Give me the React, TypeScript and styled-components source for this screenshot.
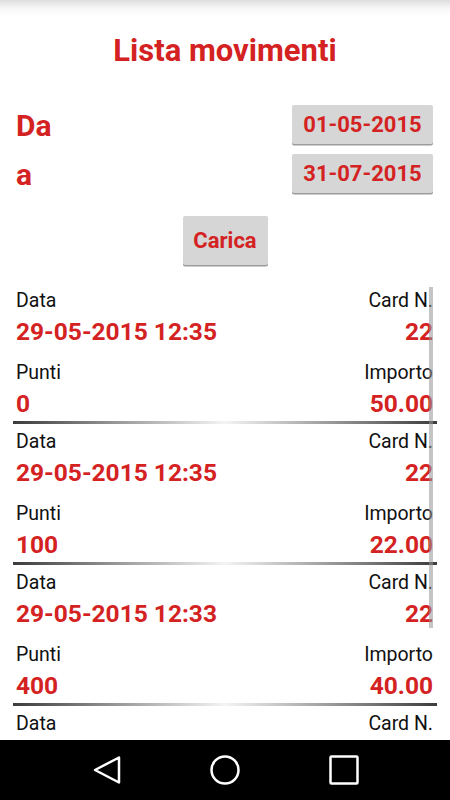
import React from 'react';
import styled, { createGlobalStyle } from 'styled-components';

const RED = '#d42222';

const GlobalStyle = createGlobalStyle`
  html, body {
    margin: 0;
    padding: 0;
    background: #fff;
  }
  body {
    font-family: Roboto, 'Noto Sans', 'Liberation Sans', sans-serif;
  }
`;

const Screen = styled.div`
  width: 450px;
  height: 800px;
  display: flex;
  flex-direction: column;
  background: #fff;
  overflow: hidden;
`;

const TopShadow = styled.div`
  height: 16px;
  flex-shrink: 0;
  background: linear-gradient(#dedede, #f6f6f6 50%, #fff);
`;

const Title = styled.h1`
  margin: 16px 0 0;
  font-size: 31px;
  line-height: 38px;
  font-weight: 700;
  color: ${RED};
  text-align: center;
`;

const Filters = styled.div`
  display: flex;
  flex-direction: column;
  gap: 10px;
  margin-top: 35px;
  padding: 0 17px 0 16px;
`;

const FilterRow = styled.div`
  display: flex;
  align-items: center;
  justify-content: space-between;
  height: 39px;
`;

const FilterLabel = styled.span`
  font-size: 30px;
  line-height: 36px;
  font-weight: 700;
  color: ${RED};
  margin-top: 3px;
`;

const GreyButton = styled.button<{ $width: number; $height: number }>`
  width: ${(p) => p.$width}px;
  height: ${(p) => p.$height}px;
  padding: 0;
  border: none;
  border-radius: 2px;
  background: #d6d6d6;
  box-shadow: 0 1.5px 0 #9c9c9c;
  font-family: inherit;
  font-size: 22px;
  font-weight: 700;
  color: ${RED};
  display: flex;
  align-items: center;
  justify-content: center;
  cursor: pointer;
`;

const LoadWrap = styled.div`
  display: flex;
  justify-content: center;
  margin-top: 23px;
`;

const List = styled.div`
  position: relative;
  flex: 1;
  margin-top: 18px;
  padding: 0 13px;
  overflow: hidden;
`;

const Item = styled.div`
  padding-top: 7px;
`;

const Pair = styled.div<{ $second?: boolean }>`
  display: flex;
  justify-content: space-between;
  padding: 0 4px 0 3px;
  margin-top: ${(p) => (p.$second ? 16 : 0)}px;
`;

const Col = styled.div<{ $right?: boolean }>`
  display: flex;
  flex-direction: column;
  gap: 5px;
  text-align: ${(p) => (p.$right ? 'right' : 'left')};
`;

const Label = styled.span`
  font-size: 19.5px;
  line-height: 22px;
  color: #111;
`;

const Value = styled.span`
  font-size: 24.5px;
  line-height: 29px;
  font-weight: 700;
  color: ${RED};
`;

const Separator = styled.div`
  height: 3px;
  margin-top: 3px;
  background: linear-gradient(
    to right,
    #3c3c3c,
    #9a9a9a 25%,
    #f4f4f4 50%,
    #9a9a9a 75%,
    #3c3c3c
  );
`;

const ScrollThumb = styled.div`
  position: absolute;
  top: 4px;
  right: 17px;
  width: 4px;
  height: 341px;
  background: rgba(150, 150, 150, 0.55);
`;

const NavBar = styled.div`
  height: 60px;
  flex-shrink: 0;
  background: #000;
  display: flex;
  align-items: center;
  justify-content: center;
  gap: 88.5px;
`;

const NavIcon = styled.svg`
  width: 30px;
  height: 30px;
  display: block;
`;

interface IMovement {
  date: string;
  card: string;
  points: string;
  amount: string;
}

const movements: IMovement[] = [
  { date: '29-05-2015 12:35', card: '22', points: '0', amount: '50.00' },
  { date: '29-05-2015 12:35', card: '22', points: '100', amount: '22.00' },
  { date: '29-05-2015 12:33', card: '22', points: '400', amount: '40.00' },
  { date: '28-05-2015 18:10', card: '22', points: '250', amount: '25.00' },
];

const MovementItem: React.FC<{ movement: IMovement }> = ({ movement }) => (
  <Item>
    <Pair>
      <Col>
        <Label>Data</Label>
        <Value>{movement.date}</Value>
      </Col>
      <Col $right>
        <Label>Card N.</Label>
        <Value>{movement.card}</Value>
      </Col>
    </Pair>
    <Pair $second>
      <Col>
        <Label>Punti</Label>
        <Value>{movement.points}</Value>
      </Col>
      <Col $right>
        <Label>Importo</Label>
        <Value>{movement.amount}</Value>
      </Col>
    </Pair>
    <Separator />
  </Item>
);

const App: React.FC = () => {
  return (
    <Screen>
      <GlobalStyle />
      <TopShadow />
      <Title>Lista movimenti</Title>
      <Filters>
        <FilterRow>
          <FilterLabel>Da</FilterLabel>
          <GreyButton $width={141} $height={39}>01-05-2015</GreyButton>
        </FilterRow>
        <FilterRow>
          <FilterLabel>a</FilterLabel>
          <GreyButton $width={141} $height={39}>31-07-2015</GreyButton>
        </FilterRow>
      </Filters>
      <LoadWrap>
        <GreyButton $width={85} $height={49}>Carica</GreyButton>
      </LoadWrap>
      <List>
        {movements.map((m, i) => (
          <MovementItem key={i} movement={m} />
        ))}
        <ScrollThumb />
      </List>
      <NavBar>
        <NavIcon viewBox='0 0 30 30'>
          <path d='M27 2.5 L3 15 L27 27.5 Z' fill='none' stroke='#fff' strokeWidth='2.5' strokeLinejoin='round' />
        </NavIcon>
        <NavIcon viewBox='0 0 30 30'>
          <circle cx='15' cy='15' r='13.5' fill='none' stroke='#fff' strokeWidth='2.5' />
        </NavIcon>
        <NavIcon viewBox='0 0 30 30'>
          <rect x='1.5' y='1.5' width='27' height='27' fill='none' stroke='#fff' strokeWidth='2.5' rx='1' />
        </NavIcon>
      </NavBar>
    </Screen>
  );
};

export default App;
